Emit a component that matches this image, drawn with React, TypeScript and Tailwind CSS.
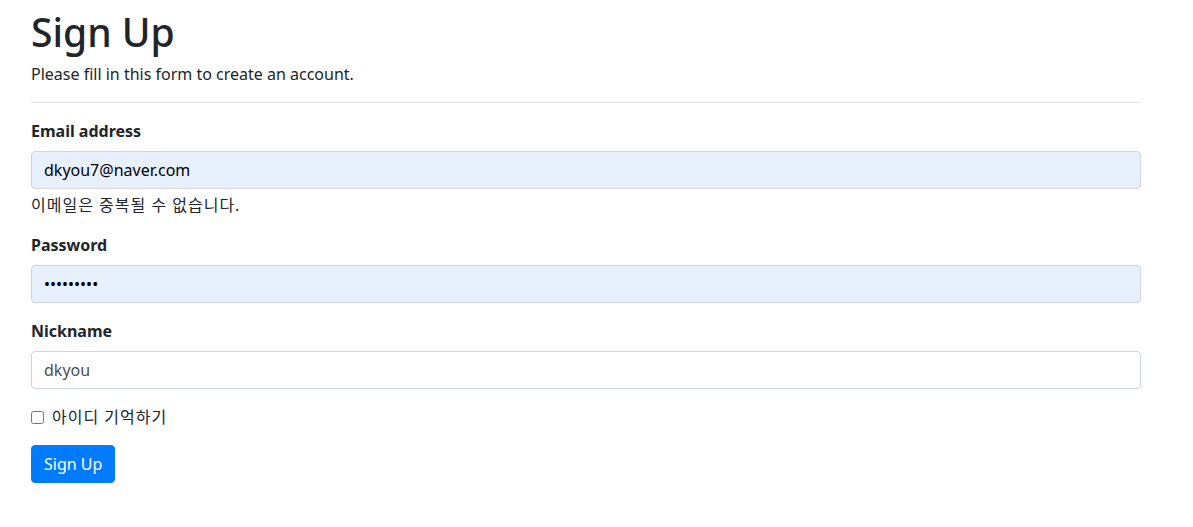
import React from "react";

const font = { fontFamily: '"Noto Sans", "Noto Sans CJK KR", sans-serif' };

export default function App() {
  return (
    <div className="min-h-[527px] bg-white text-[#212529]" style={font}>
      <div className="w-[1110px] ml-[31px] pt-[8px]">
        <h1 className="text-[39px] leading-[48px] font-medium mb-[6px]">Sign Up</h1>
        <p className="text-base leading-6">Please fill in this form to create an account.</p>
        <hr className="my-4 border-t border-black/10" />

        <form className="flex flex-col" onSubmit={(e) => e.preventDefault()}>
          <div className="mb-4">
            <label className="block text-base leading-6 font-bold mb-2">Email address</label>
            <input
              type="email"
              readOnly
              defaultValue="dkyou7@naver.com"
              className="block w-full h-[38px] px-3 py-1.5 text-base bg-[#e8f0fe] text-black border border-[#ced4da] rounded outline-none"
            />
            <div className="mt-1 text-base leading-6 tracking-[1px]">이메일은 중복될 수 없습니다.</div>
          </div>

          <div className="mb-4">
            <label className="block text-base leading-6 font-bold mb-2">Password</label>
            <input
              type="password"
              readOnly
              defaultValue="123456789"
              className="block w-full h-[38px] px-3 py-1.5 text-base bg-[#e8f0fe] text-black border border-[#ced4da] rounded outline-none"
            />
          </div>

          <div className="mb-4">
            <label className="block text-base leading-6 font-bold mb-2">Nickname</label>
            <input
              type="text"
              readOnly
              defaultValue="dkyou"
              className="block w-full h-[38px] px-3 py-1.5 text-base bg-white text-[#495057] border border-[#ced4da] rounded outline-none"
            />
          </div>

          <div className="mb-4 flex items-center h-6">
            <input type="checkbox" className="w-[13px] h-[13px] m-0 mr-[8px]" />
            <label className="text-base leading-6 tracking-[1px]">아이디 기억하기</label>
          </div>

          <div>
            <button
              type="submit"
              className="h-[38px] px-3 text-base text-white bg-[#007bff] border border-[#007bff] rounded"
            >
              Sign Up
            </button>
          </div>
        </form>
      </div>
    </div>
  );
}
